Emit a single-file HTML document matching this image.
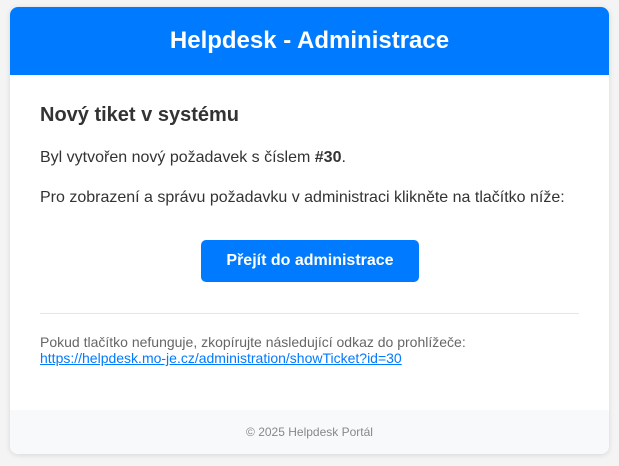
<!DOCTYPE html>
<html><head><meta charset="utf-8"><style>
body{margin:0;background:#f4f4f4;font-family:"Liberation Sans",Arial,sans-serif;width:619px;height:466px;overflow:hidden}
.card{position:absolute;left:10px;top:7px;width:599px;height:447px;background:#fff;border-radius:8px;box-shadow:0 1px 6px rgba(0,0,0,.12);overflow:hidden}
.hd{height:68px;background:#007bff;color:#fff;font-weight:bold;font-size:24px;text-align:center;line-height:68px}
.t{position:absolute;left:30px;top:97px;font-size:20px;font-weight:bold;color:#333}
.p{position:absolute;left:30px;font-size:16px;color:#333}
.btn{position:absolute;left:191px;top:233px;width:218px;height:42px;background:#007bff;border-radius:5px;color:#fff;font-weight:bold;font-size:16px;text-align:center;line-height:42px}
.hr{position:absolute;left:30px;right:30px;top:306px;border-top:1px solid #e6e6e6}
.s{position:absolute;left:30px;top:327px;font-size:14px;color:#666;line-height:16px}
.s a{color:#007bff;text-decoration:underline}
.ft{position:absolute;left:0;right:0;bottom:0;height:44px;background:#f8f9fa;color:#888;font-size:12px;text-align:center;line-height:44px}
</style></head><body><div class="card">
<div class="hd">Helpdesk - Administrace</div>
<div class="t">Nový tiket v systému</div>
<div class="p" style="top:142px">Byl vytvořen nový požadavek s číslem <b>#30</b>.</div>
<div class="p" style="top:182px">Pro zobrazení a správu požadavku v administraci klikněte na tlačítko níže:</div>
<div class="btn">Přejít do administrace</div>
<div class="hr"></div>
<div class="s">Pokud tlačítko nefunguje, zkopírujte následující odkaz do prohlížeče:<br><a>https://helpdesk.mo-je.cz/administration/showTicket?id=30</a></div>
<div class="ft">© 2025 Helpdesk Portál</div>
</div></body></html>
